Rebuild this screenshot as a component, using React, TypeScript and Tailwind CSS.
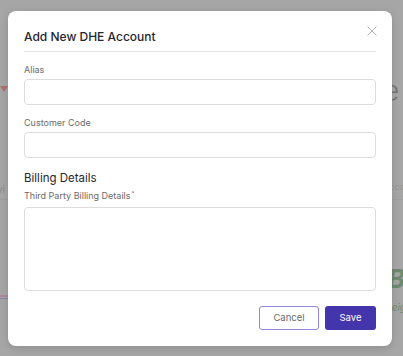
import React from 'react'

// Faint page that sits behind the dialog's dim backdrop
function BackdropPage() {
  return (
    <div className="absolute inset-0 flex justify-between bg-[#a6a6a6]">
      <div className="flex w-[12px] flex-col">
        <div className="mt-[86px] h-0 w-0 border-l-[4px] border-r-[4px] border-t-[6px] border-l-transparent border-r-transparent border-t-[#b0706f]" />
        <div className="mt-[90px] -ml-[3px] text-[10px] text-[#8c8c8c]">vi</div>
        <div className="mt-[98px] h-[2px] w-[10px] bg-[#b08aa0]" />
        <div className="mt-px h-px w-[10px] bg-[#8e86a6]" />
      </div>
      <div className="flex w-[30px] flex-col items-end">
        <div className="mt-[78px] mr-[4px] text-[26px] font-light leading-none text-[#727272]">e</div>
        <div className="mt-[76px] -mr-[2px] text-[9px] text-[#949494]">cco</div>
        <div className="mt-[72px] -mr-[2px] text-[26px] font-bold italic leading-none text-[#6e8a6e]">3B</div>
        <div className="mt-[8px] -mr-[3px] text-[10px] italic text-[#6e8a6e]">eig</div>
      </div>
      <div className="absolute left-0 right-0 top-[199px] h-px bg-[#9f9f9f]" />
    </div>
  )
}

function Label({ text, star }: { text: string; star?: boolean }) {
  return (
    <label className="text-[9px] leading-[14px] text-[#6b6b6b]">
      {text}
      {star && <sup className="ml-px text-[6px]">*</sup>}
    </label>
  )
}

function Field({ label }: { label: string }) {
  return (
    <div className="flex flex-col">
      <Label text={label} />
      <input className="mt-[2px] h-[26px] w-full rounded-[4px] border border-[#dcdcdc] bg-white outline-none" />
    </div>
  )
}

export default function App() {
  return (
    <div className="relative h-[356px] w-[403px] overflow-hidden" style={{ fontFamily: 'Inter, "Noto Sans", sans-serif' }}>
      <BackdropPage />
      <div className="absolute inset-0 pl-[8px] pt-[11px]">
        <div className="relative h-[335px] w-[384px] rounded-[8px] bg-white px-[16px] pt-[16px] shadow-[0_2px_8px_rgba(0,0,0,0.15)]">
          <button className="absolute right-[14px] top-[14px] h-[12px] w-[12px]">
            <svg viewBox="0 0 12 12" className="h-[12px] w-[12px]" stroke="#b3b3b3" strokeWidth="1" fill="none">
              <path d="M1.5 1.5L10.5 10.5M10.5 1.5L1.5 10.5" />
            </svg>
          </button>

          <div className="border-b border-[#e6e6e6] pb-[5px]">
            <h2 className="text-[12px] font-medium leading-[19px] text-[#26262e]">Add New DHE Account</h2>
          </div>

          <div className="mt-[11px] flex flex-col gap-[11px]">
            <Field label="Alias" />
            <Field label="Customer Code" />
          </div>

          <h3 className="mt-[12px] text-[11.5px] leading-[16px] text-[#26262e]">Billing Details</h3>
          <div className="mt-[3px] flex flex-col">
            <Label text="Third Party Billing Details" star />
            <textarea className="mt-[4px] h-[84px] w-full resize-none rounded-[4px] border border-[#dcdcdc] bg-white outline-none" />
          </div>

          <div className="mt-[15px] flex justify-end gap-[6px]">
            <button className="h-[24px] w-[60px] rounded-[3px] border border-[#8f86e0] bg-white text-[9.5px] text-[#6b6b6b]">Cancel</button>
            <button className="h-[24px] w-[51px] rounded-[3px] bg-[#4535ad] text-[9.5px] text-white">Save</button>
          </div>
        </div>
      </div>
    </div>
  )
}
